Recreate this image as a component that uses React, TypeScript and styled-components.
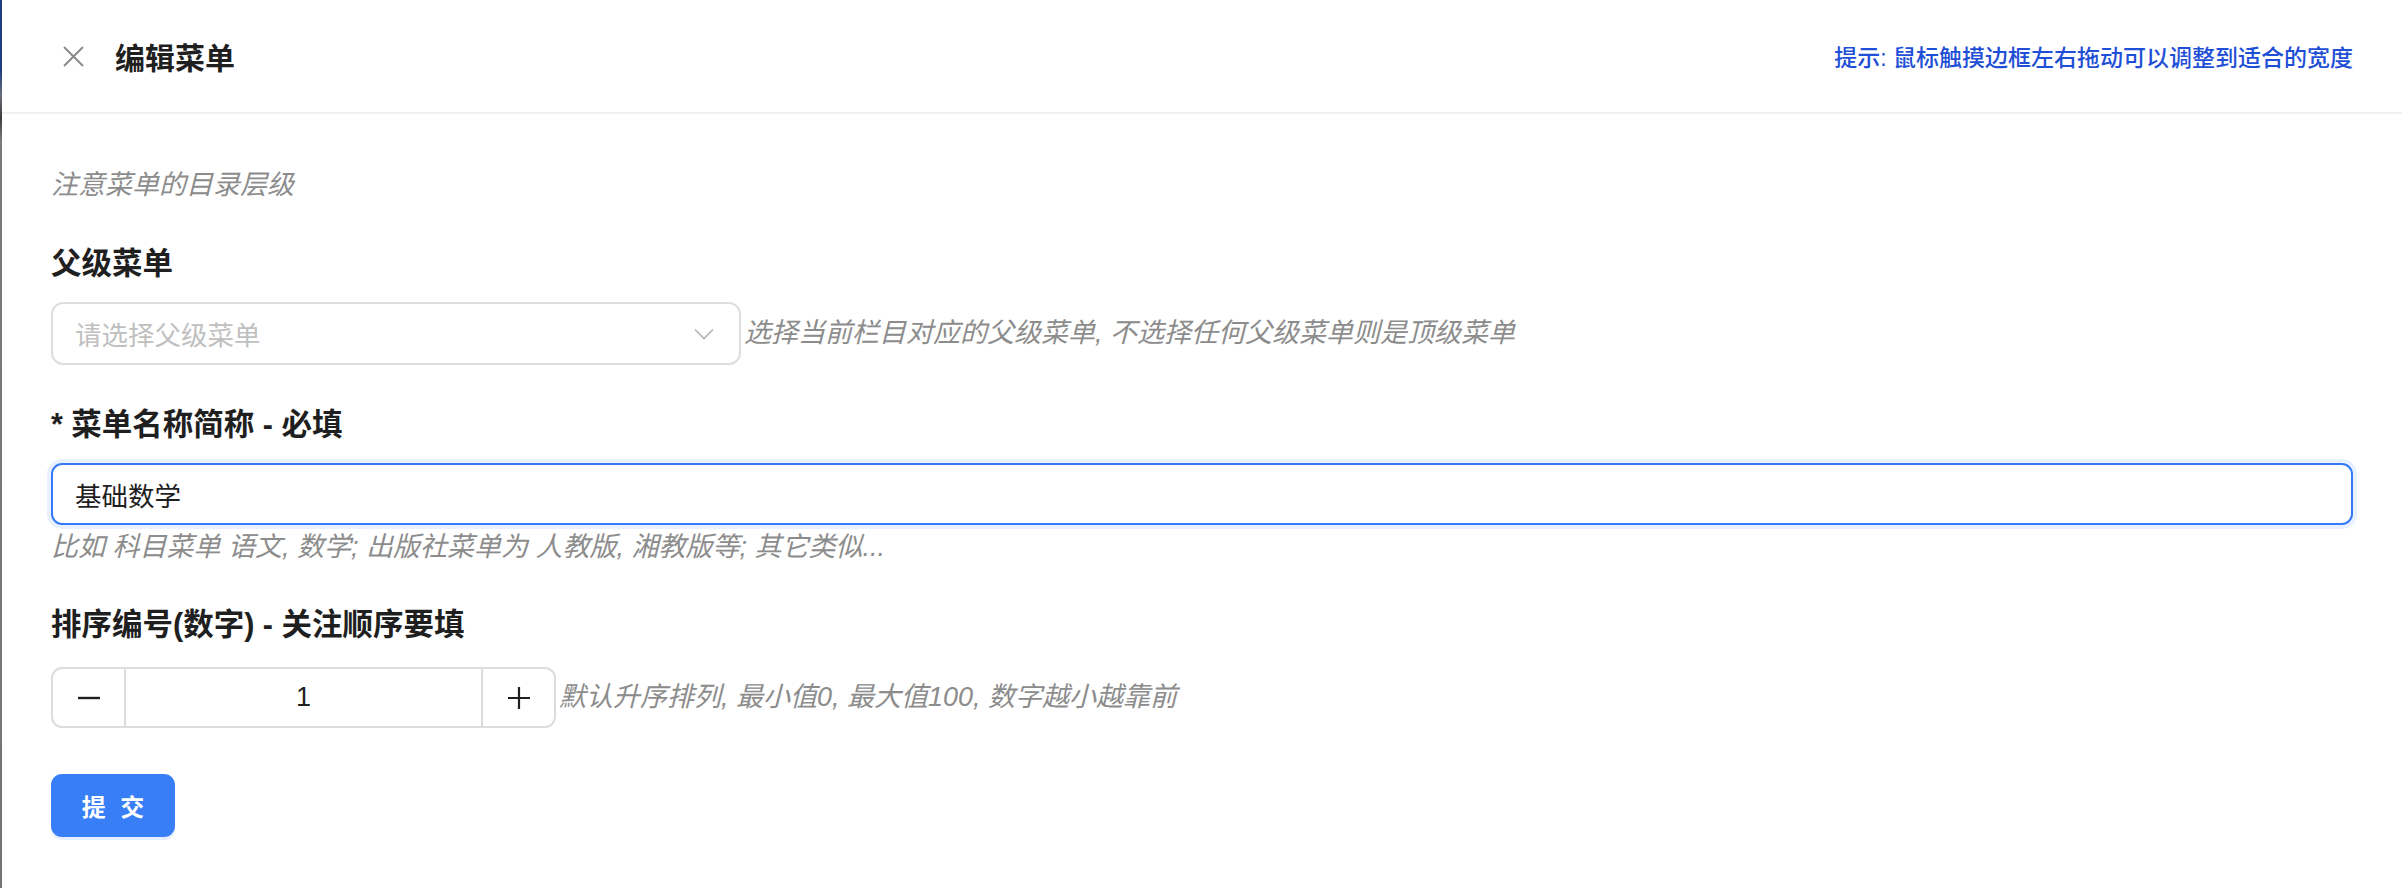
import styled, { createGlobalStyle } from "styled-components";

const GlobalStyle = createGlobalStyle`
  html, body {
    margin: 0;
    padding: 0;
    background: #fff;
  }
  body {
    font-family: "Liberation Sans", "Noto Sans CJK SC", sans-serif;
    color: #1f1f1f;
  }
`;

const Page = styled.div`
  display: flex;
  min-height: 888px;
`;

// the dark edge of the window behind the drawer
const Edge = styled.div`
  flex: 0 0 2px;
  background: linear-gradient(
    to bottom,
    #1d3d7e 0px,
    #1d3d7e 70px,
    #6a6f7a 95px,
    #3c3c3c 118px,
    #7a7a7a 140px,
    #737373 100%
  );
`;

const Drawer = styled.div`
  flex: 1 1 auto;
  display: flex;
  flex-direction: column;
`;

const Header = styled.div`
  height: 112px;
  display: flex;
  align-items: center;
  padding: 0 49px 0 59px;
  border-bottom: 2px solid #f0f0f0;
`;

const CloseButton = styled.button`
  border: 0;
  background: none;
  padding: 0;
  width: 25px;
  height: 25px;
  display: flex;
  align-items: center;
  justify-content: center;
  color: #8a8a8a;
  cursor: pointer;
`;

const Title = styled.div`
  margin-left: 29px;
  font-size: 30px;
  font-weight: 700;
  color: #1f1f1f;
`;

const Hint = styled.div`
  margin-left: auto;
  font-size: 23px;
  font-weight: 500;
  color: #1f4fd6;
`;

const Body = styled.div`
  padding: 0 49px;
  display: flex;
  flex-direction: column;
`;

const Help = styled.div<{ $gap?: number }>`
  font-size: 27px;
  line-height: 39px;
  font-style: italic;
  color: #8c8c8c;
  white-space: nowrap;
  margin-top: ${(p) => p.$gap ?? 0}px;
`;

const Field = styled.div<{ $gap: number }>`
  display: flex;
  flex-direction: column;
  margin-top: ${(p) => p.$gap}px;
`;

const Label = styled.div`
  font-size: 30.5px;
  line-height: 40px;
  font-weight: 700;
  color: #1f1f1f;
`;

const Row = styled.div<{ $gap: number }>`
  display: flex;
  align-items: center;
  margin-top: ${(p) => p.$gap}px;
`;

const Select = styled.div`
  box-sizing: border-box;
  width: 690px;
  height: 63px;
  border: 2px solid #dedede;
  border-radius: 12px;
  display: flex;
  align-items: center;
  padding: 0 25px 0 22px;
  margin-right: 3px;
  font-size: 26.5px;
  color: #bfbfbf;
  span {
    flex: 1;
  }
`;

const TextInput = styled.div`
  box-sizing: border-box;
  flex: 1;
  height: 62px;
  border: 2px solid #3579f6;
  border-radius: 11px;
  box-shadow: 0 0 0 4px #e9f1fe;
  display: flex;
  align-items: center;
  padding: 0 22px;
  font-size: 26.5px;
  color: #1f1f1f;
`;

const Stepper = styled.div`
  box-sizing: border-box;
  width: 505px;
  height: 61px;
  border: 2px solid #dcdcdc;
  border-radius: 11px;
  display: flex;
  margin-right: 3px;
`;

const StepButton = styled.div<{ $side: "left" | "right" }>`
  flex: 0 0 71px;
  display: flex;
  align-items: center;
  justify-content: center;
  color: #1f1f1f;
  ${(p) =>
    p.$side === "left"
      ? "border-right: 2px solid #dcdcdc;"
      : "border-left: 2px solid #dcdcdc;"}
`;

const StepValue = styled.div`
  flex: 1;
  display: flex;
  align-items: center;
  justify-content: center;
  font-size: 27px;
  color: #1f1f1f;
`;

const SubmitButton = styled.button`
  margin-top: 46px;
  align-self: flex-start;
  width: 124px;
  height: 63px;
  border: 0;
  border-radius: 11px;
  background: #377ef7;
  box-shadow: 0 3px 0 #e6efff;
  color: #fff;
  font-family: inherit;
  font-size: 24px;
  font-weight: 600;
  letter-spacing: 4px;
  text-indent: 4px;
  cursor: pointer;
`;

export default function App() {
  return (
    <Page>
      <GlobalStyle />
      <Edge />
      <Drawer>
        <Header>
          <CloseButton aria-label="close">
            <svg width="25" height="25" viewBox="0 0 25 25">
              <path
                d="M3 3 L22 22 M22 3 L3 22"
                stroke="currentColor"
                strokeWidth="2"
                fill="none"
              />
            </svg>
          </CloseButton>
          <Title>编辑菜单</Title>
          <Hint>提示: 鼠标触摸边框左右拖动可以调整到适合的宽度</Hint>
        </Header>
        <Body>
          <Help $gap={52}>注意菜单的目录层级</Help>

          <Field $gap={38}>
            <Label>父级菜单</Label>
            <Row $gap={19}>
              <Select>
                <span>请选择父级菜单</span>
                <svg width="20" height="12" viewBox="0 0 20 12">
                  <path
                    d="M1 1.5 L10 10.5 L19 1.5"
                    stroke="#b5b5b5"
                    strokeWidth="1.6"
                    fill="none"
                  />
                </svg>
              </Select>
              <Help>选择当前栏目对应的父级菜单, 不选择任何父级菜单则是顶级菜单</Help>
            </Row>
          </Field>

          <Field $gap={39}>
            <Label>* 菜单名称简称 - 必填</Label>
            <Row $gap={19}>
              <TextInput>基础数学</TextInput>
            </Row>
            <Help $gap={3}>
              比如 科目菜单 语文, 数学; 出版社菜单为 人教版, 湘教版等; 其它类似...
            </Help>
          </Field>

          <Field $gap={37}>
            <Label>排序编号(数字) - 关注顺序要填</Label>
            <Row $gap={23}>
              <Stepper>
                <StepButton $side="left">
                  <svg width="24" height="24" viewBox="0 0 24 24">
                    <path d="M1 12 H23" stroke="currentColor" strokeWidth="2.4" />
                  </svg>
                </StepButton>
                <StepValue>1</StepValue>
                <StepButton $side="right">
                  <svg width="24" height="24" viewBox="0 0 24 24">
                    <path
                      d="M1 12 H23 M12 1 V23"
                      stroke="currentColor"
                      strokeWidth="2.2"
                    />
                  </svg>
                </StepButton>
              </Stepper>
              <Help>默认升序排列, 最小值0, 最大值100, 数字越小越靠前</Help>
            </Row>
          </Field>

          <SubmitButton>提 交</SubmitButton>
        </Body>
      </Drawer>
    </Page>
  );
}
